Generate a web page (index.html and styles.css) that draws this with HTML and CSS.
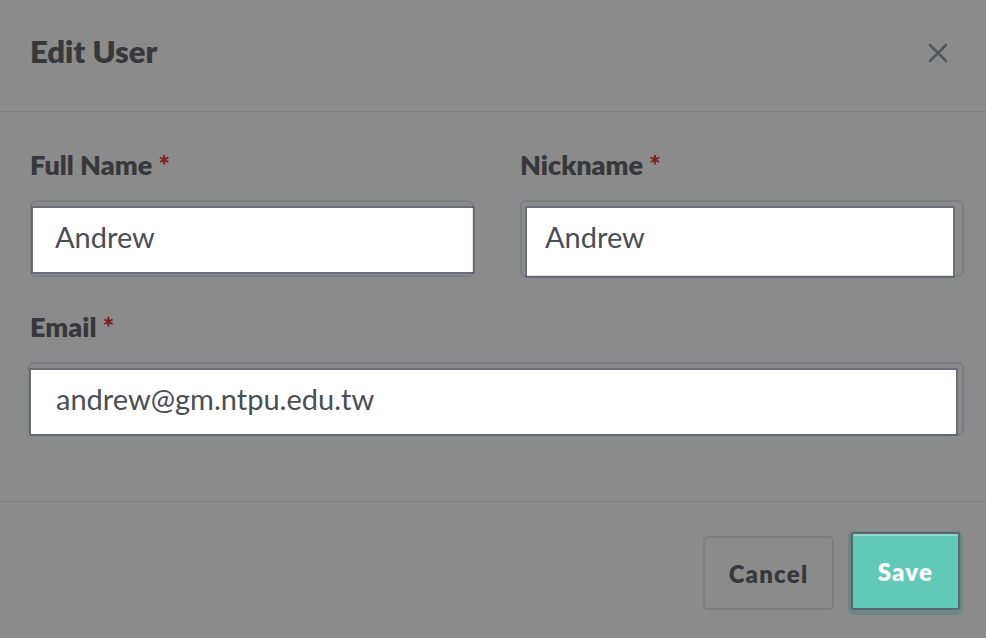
FILE: index.html
```html
<!DOCTYPE html>
<html lang="en">
<head>
<meta charset="utf-8">
<title>Edit User</title>
<link rel="stylesheet" href="styles.css">
</head>
<body>
<div class="modal">
  <header class="modal-head">
    <h2 class="title">Edit User</h2>
    <button class="close" aria-label="Close">
      <svg viewBox="0 0 20 20" width="20" height="20"><path d="M2 2 L18 18 M18 2 L2 18" stroke="#54565a" stroke-width="2.6" stroke-linecap="round" fill="none"/></svg>
    </button>
  </header>
  <section class="modal-body">
    <div class="row-two">
      <div class="group">
        <label class="label">Full Name <span class="req">*</span></label>
        <div class="field field-full"><input class="input input-full" value="Andrew"></div>
      </div>
      <div class="group">
        <label class="label">Nickname <span class="req">*</span></label>
        <div class="field field-nick"><input class="input input-nick" value="Andrew"></div>
      </div>
    </div>
    <div class="group group-email">
      <label class="label">Email <span class="req">*</span></label>
      <div class="field field-email"><input class="input input-email" value="andrew@gm.ntpu.edu.tw"></div>
    </div>
  </section>
  <footer class="modal-foot">
    <button class="btn btn-cancel">Cancel</button>
    <button class="btn btn-save">Save</button>
  </footer>
</div>
</body>
</html>
```
FILE: styles.css
```css
* { box-sizing: border-box; }
html, body { margin: 0; padding: 0; }
body {
  background: #8b8b8b;
  font-family: Lato, "Open Sans", sans-serif;
  color: #36383b;
}
.modal {
  width: 986px;
  height: 638px;
  display: flex;
  flex-direction: column;
}
.modal-head {
  height: 112px;
  border-bottom: 1px solid #7f7f7f;
  display: flex;
  justify-content: space-between;
  align-items: flex-start;
  padding: 33px 38px 0 30px;
}
.title {
  margin: 0;
  font-size: 31px;
  line-height: 37px;
  font-weight: 800;
  color: #36383b;
}
.close {
  margin-top: 10px;
  width: 20px;
  height: 20px;
  padding: 0;
  border: 0;
  background: transparent;
  display: block;
}
.close svg { display: block; }
.modal-body {
  flex: 1;
  padding: 38px 26px 0 30px;
}
.row-two {
  display: grid;
  grid-template-columns: 446px 440px;
  column-gap: 44px;
}
.group { display: flex; flex-direction: column; }
.group-email { margin-top: 34px; }
.label {
  display: block;
  font-size: 27px;
  line-height: 30px;
  font-weight: 800;
  color: #36383b;
  margin-bottom: 26px;
}
.req { color: #7a2222; }
.field { position: relative; }
.field::after {
  content: "";
  position: absolute;
  top: -6px;
  height: 73px;
  border: 2px solid rgba(40, 50, 90, 0.14);
  border-radius: 6px;
  pointer-events: none;
}
.input {
  display: block;
  background: #fff;
  border: 2px solid #6c6f79;
  border-radius: 0;
  font-family: Lato, "Open Sans", sans-serif;
  font-size: 29px;
  color: #4a4e57;
  padding: 0 0 8px 22px;
  outline: none;
}
.input-full { margin-left: 1px; width: 444px; height: 68px; padding-left: 22px; }
.field-full::after { left: 0; width: 440px; }
.input-nick { margin-left: 5px; width: 430px; height: 72px; padding-left: 18px; padding-bottom: 12px; }
.field-nick::after { left: 0; width: 440px; }
.input-email { margin-left: -1px; width: 929px; height: 68px; padding-left: 25px; }
.field-email::after { left: -2px; width: 932px; height: 70px; }
.modal-foot {
  height: 137px;
  border-top: 1px solid #7f7f7f;
  display: flex;
  justify-content: flex-end;
  align-items: flex-end;
  gap: 17px;
  padding: 0 26px 28px 0;
}
.btn {
  font-family: Lato, "Open Sans", sans-serif;
  font-weight: 800;
  font-size: 24px;
  letter-spacing: 1.2px;
  cursor: pointer;
}
.btn-cancel {
  width: 131px;
  height: 74px;
  background: transparent;
  border: 2px solid #7e7e80;
  border-radius: 5px;
  color: #36383b;
}
.btn-save {
  width: 109px;
  height: 78px;
  background: #62c8b8;
  border: 2px solid #5d6570;
  border-radius: 3px;
  color: #ffffff;
  box-shadow: inset 0 2px 0 #8fd8cb, 0 2px 0 3px #6b8883;
}
```
